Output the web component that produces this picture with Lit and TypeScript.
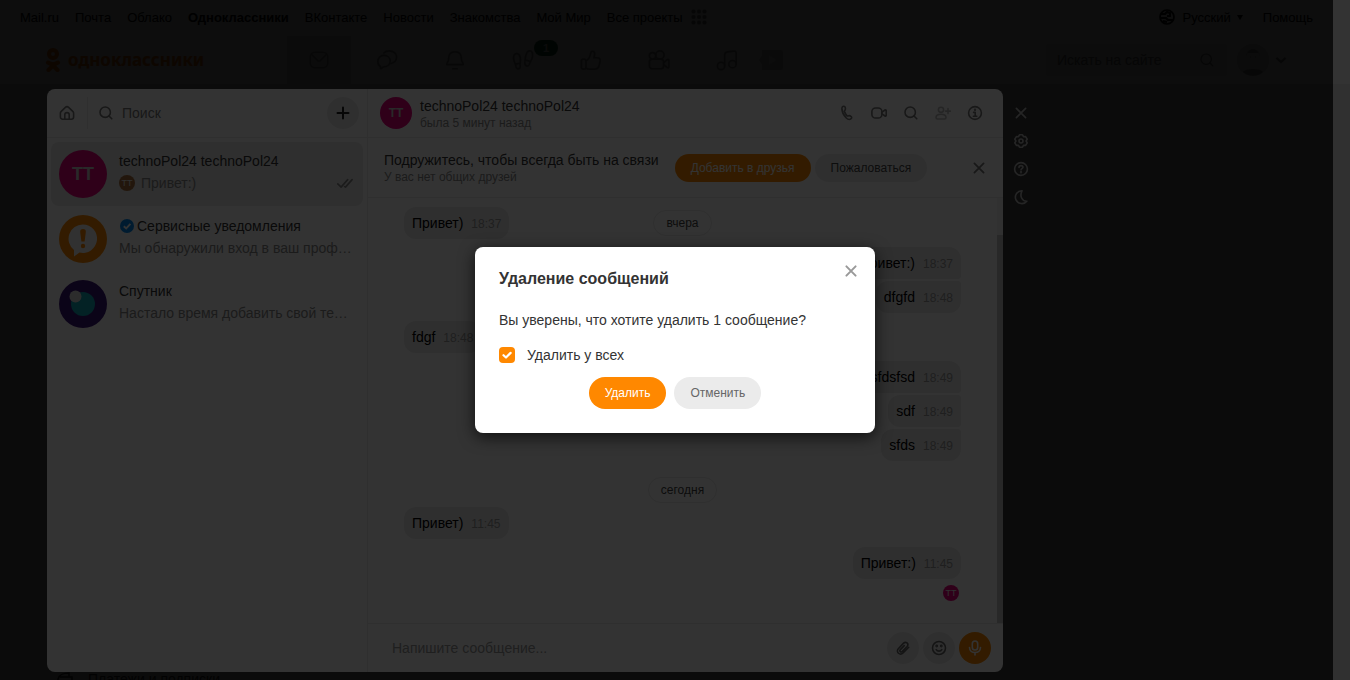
import { LitElement, html, css, svg, nothing } from "lit";
import { customElement, property, state } from "lit/decorators.js";
import { classMap } from "lit/directives/class-map.js";

const FONT = css`"Liberation Sans", Arial, sans-serif`;

const ICONS: Record<string, { size: number; body: unknown }> = {
  home: { size: 16, body: svg`<path d="M2 6.600 6.400 2.400a2.300 2.300 0 0 1 3.200 0L14 6.600c.5.5.6 1 .6 1.600v3.800a2.200 2.200 0 0 1-2.200 2.200H3.600A2.200 2.200 0 0 1 1.400 12V8.200c0-.6.1-1.100.6-1.600Z"/><path d="M5.800 14V9.800a2.200 2.200 0 0 1 4.400 0V14"/>` },
  search: { size: 16, body: svg`<circle cx="7.200" cy="7.200" r="5.200"/><path d="m11 11 2.800 2.800"/>` },
  plus: { size: 16, body: svg`<path d="M8 2.500v11M2.500 8h11"/>` },
  phone: { size: 16, body: svg`<path d="M3.900 1.500c1.300-.6 2 0 2.300 1 .4 1.300.4 2.100-.4 2.900-.5.400-.5.900-.2 1.500.6 1.500 1.200 2.600 2.300 3.700.5.5.9.5 1.400.3 1-.6 1.700-.3 2.600.5.900.7 1.100 1.500.2 2.300-1.300 1.200-3.100 1-5.100-1C4.800 10.600 3.200 7.300 2.900 4.200c-.1-1.500.1-2.300 1-2.700Z"/>` },
  video: { size: 16, body: svg`<rect x=".9" y="3" width="10" height="10" rx="3.600"/><path d="m11 7.200 3-2.200c.6-.4 1.200-.1 1.200.6v4.800c0 .7-.6 1-1.200.6l-3-2.200"/>` },
  addUser: { size: 16, body: svg`<circle cx="6" cy="4.800" r="2.600"/><path d="M1 12.600c0-2.300 1.900-3.300 5-3.300s5 1 5 3.300c0 .9-.5 1.400-1.400 1.400H2.400C1.500 14 1 13.500 1 12.600ZM13 3.600v5M10.500 6.100h5"/>` },
  info: { size: 16, body: svg`<circle cx="8" cy="8" r="6.400"/><path d="M6.600 7.400H8.200v3.800M6.400 11.300h3.400"/><circle cx="8" cy="4.800" r=".4"/>` },
  close: { size: 16, body: svg`<path d="m3.400 3.400 9.200 9.200M12.600 3.400l-9.200 9.200"/>` },
  gear: { size: 16, body: svg`<path d="M6.500 1.800h3l1 1.900 2.100-.1 1.600 2.600-1.100 1.800 1.100 1.800-1.600 2.600-2.100-.1-1 1.900h-3l-1-1.900-2.100.1-1.600-2.600L2.900 8 1.800 6.200l1.600-2.600 2.100.1Z"/><circle cx="8" cy="8" r="2"/>` },
  help: { size: 16, body: svg`<circle cx="8" cy="8" r="6.400"/><path d="M6 6.500C6 5.200 6.900 4.600 8 4.600s2 .7 2 1.700c0 1.300-2 1.400-2 2.600"/><circle cx="8" cy="11.300" r=".4"/>` },
  moon: { size: 16, body: svg`<path d="M9 1.800a6.400 6.400 0 1 0 4.800 10.400C9 12.400 6.400 7 9 1.800Z"/>` },
  clip: { size: 16, body: svg`<path d="m13.700 7.300-5.400 5.500c-3.400 3.300-7.800-.8-5-4l5-5.400c2.600-2.600 6 .4 3.800 3.100l-4.700 4.900c-1.600 1.500-3.400-.2-2-1.800l3.800-4"/>` },
  smile: { size: 16, body: svg`<circle cx="8" cy="8" r="6.500"/><path d="M5.200 9.600c1.200 2 4.400 2 5.600 0"/><circle cx="5.700" cy="6" r=".6"/><circle cx="10.300" cy="6" r=".6"/>` },
  mic: { size: 16, body: svg`<rect x="5.300" y="1" width="5.400" height="9" rx="2.700"/><path d="M2.500 7.500c0 6.700 11 6.700 11 0M8 12.600V15"/>` },
  seen: { size: 16, body: svg`<path d="m.8 8.900 3.300 3.200 6.600-7.500M7.600 11.600l.9.500 6.600-7.500"/>` },
  mail: { size: 24, body: svg`<rect x="2.500" y="3.500" width="19" height="17" rx="5"/><path d="m4 6 6 6.200c1.300 1.300 2.700 1.300 4 0L20 6"/>` },
  chats: { size: 24, body: svg`<path d="M2 13.500c0-4 3-6.500 6.800-6.500s6.700 2.600 6.700 6.200c0 3.700-2.900 6.300-7 6.300-.8 0-1.500.6-2.200 1.500-.7.9-1.400.6-1.400-.3V19C3 18 2 16 2 13.500Z"/><path d="M8.500 4.300C10 2.700 12 2 14.500 2 19 2 22.500 5 22.500 8.800c0 3.500-2.700 6.300-6 7"/>` },
  bell: { size: 24, body: svg`<path d="M5 10.500C5 6 7.500 3 12 3s7 3 7 7.500c0 3.500 2 4.500 2 6.500H3c0-2 2-3 2-6.500ZM9.500 21.500h5"/>` },
  feet: { size: 24, body: svg`<path d="M1.800 11C1.300 7.500 2.500 5 5 5s4 2.500 4.200 6c.1 3-.6 4-.3 7 .5 4.500-4 5-4.600 1C4 16 2.100 14 1.800 11ZM3.800 16.500l4.900-1M14 14.500c.3-2.500.3-4 1-7C15.800 4 17 2 19.300 2c2.900 0 3.700 3 3 6.500-.8 4-2.600 5-3.300 8-1 3.800-5.300 2.500-5-2ZM14.500 12l5.300 1.500"/>` },
  like: { size: 24, body: svg`<rect x="1.500" y="11" width="5" height="11" rx="2"/><path d="M6.500 13C10 11 11 8 11.500 5c.6-3.500 4.500-3.400 4.500.5 0 1.700-.5 3-.9 4h3.400c3 0 4 1.700 3.300 4.500l-1 4c-.8 3-2 4-4.500 4H10c-1.500 0-2.500-.5-3.500-1.500"/>` },
  camera: { size: 24, body: svg`<circle cx="5" cy="7.500" r="3.500"/><circle cx="13" cy="6.500" r="4.500"/><rect x="1.500" y="11" width="15.500" height="10.500" rx="3"/><path d="m17 15 4-3.300c1-.7 1.800-.3 1.800 1v6.500c0 1.200-.8 1.700-1.800 1l-4-3"/>` },
  music: { size: 24, body: svg`<circle cx="5.500" cy="18.500" r="4"/><circle cx="18" cy="16.500" r="4"/><path d="M9.500 18.500v-12c0-2 1-3 3-3.300l6.500-.9c2-.3 3 .5 3 2.300v12"/>` },
};

const icon = (name: string, px: number, width = 1.6) => {
  const { size, body } = ICONS[name];
  return html`<svg width=${px} height=${px} viewBox="0 0 ${size} ${size}" fill="none" stroke="currentColor"
    stroke-width=${width} stroke-linecap="round" stroke-linejoin="round" aria-hidden="true">${body}</svg>`;
};

const reset = css`
  * { box-sizing: border-box; }
  svg { display: block; flex: none; }
  button, input { font: inherit; color: inherit; border: 0; background: none; padding: 0; margin: 0; outline: 0; }
  button { cursor: pointer; }
  a { color: inherit; text-decoration: none; }
  .icon-button { display: grid; place-items: center; flex: none; }
`;

@customElement("site-header")
class SiteHeader extends LitElement {
  static styles = [reset, css`
    :host { display: block; background: #fff; color: #000; }
    .top { display: flex; align-items: center; gap: 16px; height: 36px; padding: 0 20px 2px; font-size: 13px; white-space: nowrap; }
    .strong { font-weight: bold; }
    .projects { display: flex; align-items: center; gap: 8px; }
    .lang { display: flex; align-items: center; gap: 8px; margin-left: auto; }
    .lang-name { display: flex; align-items: center; gap: 6px; }
    .caret { border: 3px solid transparent; border-top: 5px solid #000; border-bottom: 0; }
    .help { padding-left: 4px; }
    .bar { display: flex; align-items: center; height: 48px; padding: 0 44px 0 45px; }
    .logo { display: flex; align-items: center; gap: 7px; width: 242px; flex: none; color: #f70; font: bold 17px/24px "Noto Sans", sans-serif; }
    .tabs { display: flex; gap: 4px; height: 48px; }
    .tab { position: relative; width: 64px; display: grid; place-items: center; color: #999; }
    .active { background: #e6e6e6; }
    .badge { position: absolute; left: 43px; top: 4px; width: 24px; height: 16px; border-radius: 8px; background: #0a5c2c; color: #ccc; font: bold 11px/16px ${FONT}; text-align: center; }
    .player { width: 24px; flex: none; }
    .search { display: flex; align-items: center; width: 181px; height: 32px; margin-left: auto; padding: 0 12px 0 11px; background: #f0f0f0; border-radius: 4px; color: #777; font-size: 14px; }
    .search input { flex: 1; min-width: 0; }
    .search input::placeholder { color: #777; opacity: 1; }
    .user { display: flex; align-items: center; gap: 4px; margin-left: 10px; }
  `];

  render() {
    const tabs = [["mail", "Сообщения"], ["chats", "Обсуждения"], ["bell", "Оповещения"], ["feet", "Гости"], ["like", "События"], ["camera", "Видео"], ["music", "Музыка"]];
    return html`
      <nav class="top">
        ${["Mail.ru", "Почта", "Облако", "Одноклассники", "ВКонтакте", "Новости", "Знакомства", "Мой Мир"].map(
          (t) => html`<a href="#" class=${classMap({ strong: t === "Одноклассники" })}>${t}</a>`)}
        <a href="#" class="projects">Все проекты
          <svg width="16" height="16" viewBox="0 0 16 16" fill="#888">
            ${[2.5, 8, 13.5].map((y) => [2.5, 8, 13.5].map((x) => svg`<circle cx=${x} cy=${y} r="2"/>`))}
          </svg></a>
        <a href="#" class="lang">
          <svg width="16" height="16" viewBox="0 0 16 16" fill="none" stroke="#000" stroke-width="1.700"><circle cx="8" cy="8" r="7"/><path d="M2 5h4l2-2 3 1v3H8M1.500 9H7l2 2h5M4 12l4 1" stroke-width="2"/></svg>
          <span class="lang-name">Русский <span class="caret"></span></span></a>
        <a href="#" class="help">Помощь</a>
      </nav>
      <div class="bar">
        <a href="#" class="logo">
          <svg width="16" height="24" viewBox="0 0 16 24" fill="none" stroke="currentColor" stroke-width="4" stroke-linecap="round"><circle cx="8" cy="6" r="4"/><path d="M3 14.500c3 2 7 2 10 0M3.500 22 8 17.500l4.500 4.500"/></svg>
          одноклассники</a>
        <nav class="tabs">${tabs.map(([name, label]) => html`
          <a href="#" aria-label=${label} class=${classMap({ tab: true, active: name === "mail" })}>${icon(name, 22, 1.8)}${name === "feet" ? html`<span class="badge">1</span>` : nothing}</a>`)}
        </nav>
        <button class="player" aria-label="Плеер"><svg width="24" height="20" viewBox="0 0 24 20"><path d="M3 0h18a3 3 0 0 1 3 3v14a3 3 0 0 1-3 3H3v-6L0 10l3-4Z" fill="#ccc"/><path d="m10 5 8 5-8 5Z" fill="#eee"/></svg></button>
        <label class="search"><input aria-label="Искать на сайте" placeholder="Искать на сайте" />${icon("search", 16, 1.2)}</label>
        <button class="user" aria-label="Профиль">
          <svg width="32" height="32" viewBox="0 0 32 32"><circle cx="16" cy="16" r="16" fill="#dadada"/><path d="M10 9c0-3 12-3 12 0v6c0 8-12 8-12 0Z" fill="#e6e6e6"/><path d="M9.500 12c0-9 13-9 13 0l-1-3h-11ZM6 28c2-4 18-4 20 0-5 5-15 5-20 0Z" fill="#999"/><circle cx="13.500" cy="13" r=".8" fill="#999"/><circle cx="18.500" cy="13" r=".8" fill="#999"/></svg>
          <svg width="16" height="16" viewBox="0 0 16 16" fill="none" stroke="#777" stroke-width="2"><path d="m3.500 6 4.500 4 4.500-4"/></svg>
        </button>
      </div>`;
  }
}

@customElement("chat-list")
class ChatList extends LitElement {
  static styles = [reset, css`
    :host { display: block; border-right: 1px solid #e8e8e8; font-size: 14px; }
    .head { display: flex; align-items: center; height: 49px; border-bottom: 1px solid #e8e8e8; color: #777; }
    .home { width: 40px; height: 32px; }
    .find { display: flex; align-items: center; gap: 8px; flex: 1; min-width: 0; height: 32px; border-left: 1px solid #e8e8e8; padding-left: 10px; }
    .find input { flex: 1; min-width: 0; }
    .find input::placeholder { color: #777; opacity: 1; }
    .new { width: 32px; height: 32px; border-radius: 50%; background: #ebebeb; color: #222; margin-right: 8px; }
    .items { display: flex; flex-direction: column; gap: 1px; padding: 4px; }
    .item { display: flex; align-items: center; gap: 12px; height: 64px; padding: 0 10px 0 8px; border-radius: 8px; text-align: left; }
    .selected { background: #e9e9e9; }
    .avatar { width: 48px; height: 48px; border-radius: 50%; background: #eb007d; color: #ccc; font-size: 18px; font-weight: bold; line-height: 48px; text-align: center; flex: none; }
    .body { flex: 1; min-width: 0; display: flex; flex-direction: column; gap: 2px; padding-bottom: 4px; }
    .line { display: flex; align-items: center; height: 20px; gap: 2px; color: #333; }
    .preview { gap: 6px; color: #888; }
    .text { overflow: hidden; text-overflow: ellipsis; white-space: nowrap; flex: 1; }
    .mini { width: 16px; height: 16px; border-radius: 50%; background: #a8703c; color: #eee; font-size: 9px; line-height: 16px; text-align: center; }
  `];

  render() {
    return html`
      <div class="head">
        <button class="icon-button home" aria-label="Домой">${icon("home", 16)}</button>
        <label class="find">${icon("search", 16)}<input aria-label="Поиск" placeholder="Поиск" /></label>
        <button class="icon-button new" aria-label="Новый чат">${icon("plus", 16, 2)}</button>
      </div>
      <div class="items">
        <button class="item selected">
          <span class="avatar">TT</span>
          <span class="body">
            <span class="line">technoPol24 technoPol24</span>
            <span class="line preview"><span class="mini">TT</span><span class="text">Привет:)</span>${icon("seen", 16)}</span>
          </span>
        </button>
        <button class="item">
          <svg width="48" height="48" viewBox="0 0 48 48"><circle cx="24" cy="24" r="24" fill="#f80"/><path d="M24 9.500a14.200 14.200 0 1 1-3.500 28L15 41.500v-6.600A14.200 14.200 0 0 1 24 9.500Z" fill="#f4f4f4"/><path d="M24 14c2 0 3 1.200 2.800 3l-1.200 9.500h-3.200L21.200 17c-.2-1.800.8-3 2.800-3Z" fill="#f80"/><circle cx="24" cy="31" r="2.200" fill="#f80"/></svg>
          <span class="body">
            <span class="line"><svg width="16" height="16" viewBox="0 0 16 16"><circle cx="8" cy="8" r="7" fill="#08e"/><path d="m4.800 8.200 2.400 2.300 4.200-4.600" fill="none" stroke="#fff" stroke-width="1.900"/></svg>Сервисные уведомления</span>
            <span class="line preview"><span class="text">Мы обнаружили вход в ваш профиль</span></span>
          </span>
        </button>
        <button class="item">
          <svg width="48" height="48" viewBox="0 0 48 48"><circle cx="24" cy="24" r="24" fill="#3b1478"/><circle cx="24" cy="24" r="12" fill="#10a8b8"/><circle cx="16.500" cy="16.500" r="6" fill="#ddd"/></svg>
          <span class="body">
            <span class="line">Спутник</span>
            <span class="line preview"><span class="text">Настало время добавить свой телефон</span></span>
          </span>
        </button>
      </div>`;
  }
}

@customElement("chat-bubble")
class ChatBubble extends LitElement {
  @property() text = "";
  @property() time = "";
  static styles = css`
    :host { display: flex; gap: 8px; height: 32px; padding: 0 8px; border-radius: 12px; background: #ebebeb; color: #000; font-size: 14px; line-height: 32px; white-space: nowrap; }
    .time { font-size: 12px; line-height: 34px; color: #999; }
  `;
  render() {
    return html`<span>${this.text}</span><span class="time">${this.time}</span>`;
  }
}

@customElement("chat-window")
class ChatWindow extends LitElement {
  static styles = [reset, css`
    :host { display: flex; flex-direction: column; min-width: 0; min-height: 0; font-size: 14px; color: #333; }
    .head { display: flex; align-items: center; gap: 8px; height: 49px; padding: 0 16px 0 12px; border-bottom: 1px solid #e8e8e8; flex: none; }
    .avatar { width: 32px; height: 32px; border-radius: 50%; background: #eb007d; color: #ccc; font-size: 12px; font-weight: bold; line-height: 32px; text-align: center; }
    .who { flex: 1; padding-top: 2px; }
    .name { line-height: 18px; }
    .small { font-size: 12px; line-height: 16px; color: #888; }
    .tools { display: flex; gap: 8px; color: #777; }
    .tools button { width: 24px; height: 24px; }
    .tools .off { color: #bbb; }
    .invite { display: flex; align-items: center; height: 60px; padding: 0 16px; border-bottom: 1px solid #e8e8e8; flex: none; white-space: nowrap; }
    .pitch { line-height: 18px; margin-right: 16px; }
    .pill { height: 28px; padding: 0 16px; border-radius: 14px; background: #ebebeb; color: #444; font-size: 12px; margin-right: 4px; }
    .primary { background: #f80; color: #fff; }
    .dismiss { margin-left: auto; width: 16px; height: 16px; color: #777; }
    .scroller { display: flex; flex: 1; min-height: 0; }
    .feed { position: relative; flex: 1; min-width: 0; display: flex; flex-direction: column; gap: 8px; padding: 9px 36px; overflow: hidden; }
    .in { align-self: flex-start; }
    .group { display: flex; flex-direction: column; align-items: flex-end; gap: 2px; }
    .group .first { border-bottom-right-radius: 3px; }
    .group .middle { border-top-right-radius: 3px; border-bottom-right-radius: 3px; }
    .group .last { border-top-right-radius: 3px; }
    .date { height: 26px; padding: 0 12px; border: 1px solid #e8e8e8; border-radius: 13px; background: #fff; color: #444; font-size: 12px; line-height: 24px; align-self: center; }
    .today { margin: 8px 0 -4px; }
    .pinned { position: absolute; inset: 12px 0 auto; display: flex; justify-content: center; }
    .reader { align-self: flex-end; width: 16px; height: 16px; margin: -2px 2px 0 0; border-radius: 50%; background: #eb007d; color: #eee; font-size: 9px; line-height: 16px; text-align: center; }
    .track { width: 6px; padding-top: 37px; background: #f4f4f4; }
    .thumb { height: 100%; background: #c8c8c8; }
    .compose { display: flex; align-items: center; gap: 4px; height: 49px; padding: 0 12px 0 24px; border-top: 1px solid #e8e8e8; flex: none; }
    .compose input { flex: 1; min-width: 0; }
    .compose input::placeholder { color: #999; opacity: 1; }
    .round { width: 32px; height: 32px; border-radius: 50%; background: #ebebeb; color: #666; }
    .round.voice { background: #f80; color: #fff; }
  `];

  render() {
    const tools = [["phone", "Позвонить"], ["video", "Видеозвонок"], ["search", "Найти"], ["addUser", "Добавить"], ["info", "Информация"]];
    return html`
      <header class="head">
        <div class="avatar">TT</div>
        <div class="who"><div class="name">technoPol24 technoPol24</div><div class="small">была 5 минут назад</div></div>
        <div class="tools">${tools.map(([n, l]) => html`<button class=${classMap({ "icon-button": true, off: n === "addUser" })} aria-label=${l}>${icon(n, 16)}</button>`)}</div>
      </header>
      <section class="invite">
        <div class="pitch">Подружитесь, чтобы всегда быть на связи<div class="small">У вас нет общих друзей</div></div>
        <button class="pill primary">Добавить в друзья</button>
        <button class="pill">Пожаловаться</button>
        <button class="icon-button dismiss" aria-label="Закрыть">${icon("close", 16, 1.8)}</button>
      </section>
      <div class="scroller">
        <div class="feed">
          <div class="pinned"><div class="date">вчера</div></div>
          <chat-bubble class="in" text="Привет)" time="18:37"></chat-bubble>
          <div class="group">
            <chat-bubble class="first" text="Привет:)" time="18:37"></chat-bubble>
            <chat-bubble class="last" text="dfgfd" time="18:48"></chat-bubble>
          </div>
          <chat-bubble class="in" text="fdgf" time="18:48"></chat-bubble>
          <div class="group">
            <chat-bubble class="first" text="sfdsfsd" time="18:49"></chat-bubble>
            <chat-bubble class="middle" text="sdf" time="18:49"></chat-bubble>
            <chat-bubble class="last" text="sfds" time="18:49"></chat-bubble>
          </div>
          <div class="date today">сегодня</div>
          <chat-bubble class="in" text="Привет)" time="11:45"></chat-bubble>
          <div class="group"><chat-bubble text="Привет:)" time="11:45"></chat-bubble></div>
          <div class="reader">TT</div>
        </div>
        <div class="track"><div class="thumb"></div></div>
      </div>
      <footer class="compose">
        <input aria-label="Напишите сообщение" placeholder="Напишите сообщение..." />
        <button class="icon-button round" aria-label="Прикрепить">${icon("clip", 16)}</button>
        <button class="icon-button round" aria-label="Смайлы">${icon("smile", 16)}</button>
        <button class="icon-button round voice" aria-label="Голосовое сообщение">${icon("mic", 16)}</button>
      </footer>`;
  }
}

@customElement("delete-dialog")
class DeleteDialog extends LitElement {
  @state() private forAll = true;
  static styles = [reset, css`
    :host { display: block; width: 400px; max-width: 100%; position: relative; padding: 20px 24px 24px; border-radius: 8px; background: #fff; color: #333; font-size: 14px; line-height: 20px; box-shadow: 0 4px 16px rgba(0, 0, 0, 0.7); }
    .title { margin: 0 0 19px; font-size: 16px; line-height: 24px; }
    .question { margin: 0 0 15px; }
    .option { display: flex; align-items: center; gap: 12px; width: fit-content; margin-bottom: 12px; }
    .box { appearance: none; width: 16px; height: 16px; border-radius: 4px; border: 1px solid #999; }
    .box:checked { border: 0; background: #f80 url("data:image/svg+xml,%3Csvg xmlns='http://www.w3.org/2000/svg' viewBox='0 0 16 16'%3E%3Cpath d='m4.500 8.200 2.500 2.300 4.600-4.600' fill='none' stroke='white' stroke-width='2.200' stroke-linecap='round' stroke-linejoin='round'/%3E%3C/svg%3E"); }
    .actions { display: flex; justify-content: center; gap: 8px; }
    .button { height: 32px; padding: 0 16px; border-radius: 16px; background: #ebebeb; color: #666; font-size: 12px; }
    .primary { background: #f80; color: #fff; }
    .close { position: absolute; top: 16px; right: 16px; width: 16px; height: 16px; color: #999; }
  `];

  render() {
    return html`
      <h2 class="title">Удаление сообщений</h2>
      <p class="question">Вы уверены, что хотите удалить 1 сообщение?</p>
      <label class="option"><input class="box" type="checkbox" .checked=${this.forAll}
        @change=${(e: Event) => (this.forAll = (e.target as HTMLInputElement).checked)} />Удалить у всех</label>
      <div class="actions"><button class="button primary">Удалить</button><button class="button">Отменить</button></div>
      <button class="icon-button close" aria-label="Закрыть">${icon("close", 16, 2)}</button>`;
  }
}

@customElement("app-root")
class AppRoot extends LitElement {
  static styles = [reset, css`
    :host { display: flex; height: 100vh; min-height: 480px; position: relative; overflow: hidden; font-family: ${FONT}; }
    .site { position: relative; flex: 1; min-width: 0; overflow: hidden; background: #e0e0e0; }
    .rail { width: 17px; padding-top: 84px; background: #fff; }
    .rail-track { height: 100%; background: #f1f1f1; }
    .menu { width: 213px; margin-left: 47px; padding: 585px 0 0 10px; font-size: 14px; line-height: 20px; color: #333; }
    .menu a { display: flex; align-items: center; gap: 15px; white-space: nowrap; }
    .layer { position: absolute; inset: 0; background: rgba(0, 0, 0, 0.75); display: flex; padding: 89px 298px 8px 47px; }
    .messenger { display: grid; grid-template-columns: 321px minmax(0, 1fr); grid-template-rows: minmax(0, 1fr); flex: 1; min-width: 0; background: #fff; border-radius: 8px; overflow: hidden; }
    .side { display: flex; flex-direction: column; align-items: center; gap: 4px; width: 32px; padding: 12px 0 0 4px; color: #bbb; flex: none; }
    .side button { width: 24px; height: 24px; }
    .overlay { position: absolute; inset: 0; display: grid; place-items: center; background: rgba(0, 0, 0, 0.8); }
  `];

  render() {
    const side = [["close", "Закрыть"], ["gear", "Настройки"], ["help", "Помощь"], ["moon", "Тёмная тема"]];
    return html`
      <div class="site">
        <site-header></site-header>
        <nav class="menu"><a href="#"><svg width="16" height="16" viewBox="0 0 16 16" fill="none" stroke="currentColor" stroke-width="1.500"><path d="M1 8c1-4 6-6 11-6v4M1 8v6h14V6H3"/></svg>Платежи и подписки</a></nav>
        <div class="layer">
          <main class="messenger"><chat-list></chat-list><chat-window></chat-window></main>
          <aside class="side">${side.map(([n, l]) => html`<button class="icon-button" aria-label=${l}>${icon(n, 16)}</button>`)}</aside>
        </div>
      </div>
      <div class="rail"><div class="rail-track"></div></div>
      <div class="overlay"><delete-dialog role="dialog" aria-modal="true" aria-label="Удаление сообщений"></delete-dialog></div>`;
  }
}
